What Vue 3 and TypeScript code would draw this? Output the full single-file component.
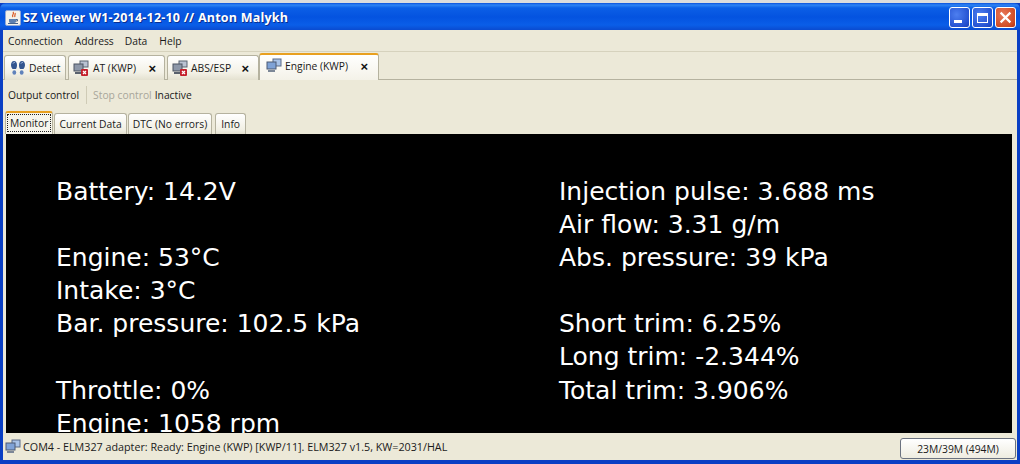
<script setup lang="ts">
const left: string[] = ['Battery: 14.2V', '', 'Engine: 53°C', 'Intake: 3°C', 'Bar. pressure: 102.5 kPa', '', 'Throttle: 0%', 'Engine: 1058 rpm'];
const right: string[] = ['Injection pulse: 3.688 ms', 'Air flow: 3.31 g/m', 'Abs. pressure: 39 kPa', '', 'Short trim: 6.25%', 'Long trim: -2.344%', 'Total trim: 3.906%'];
const menus: string[] = ['Connection', 'Address', 'Data', 'Help'];
const subTabs: string[] = ['Current Data', 'DTC (No errors)', 'Info'];
</script>

<template>
  <div class="window">
    <div class="titlebar">
      <svg class="app-icon" viewBox="0 0 16 16">
        <rect x="0.5" y="0.5" width="15" height="15" rx="1.5" fill="#f4f1ea" stroke="#8fa6d6" />
        <path d="M8 2c2 2-2 3 0 5M10 3c1 1.500-1 2 0 4" fill="none" stroke="#d9541e" stroke-width="1.200" />
        <path d="M4 9h7v2.500c0 1-1 1.500-3.500 1.500S4 12.500 4 11.500z" fill="#5c7fb0" />
        <path d="M11 9.500h1.500v1.500H11M3 13.500h10" fill="none" stroke="#44628f" />
      </svg>
      <span class="title">SZ Viewer W1-2014-12-10 // Anton Malykh</span>
      <div class="controls">
        <div class="ctl blue"><i class="min-glyph"></i></div>
        <div class="ctl blue"><i class="max-glyph"></i></div>
        <div class="ctl red">
          <svg viewBox="0 0 12 12" class="x-glyph"><path d="M1.500 1.500l9 9M10.500 1.500l-9 9" stroke="#fff" stroke-width="2" /></svg>
        </div>
      </div>
    </div>

    <div class="client">
      <nav class="menubar">
        <span v-for="m in menus" :key="m" class="menu">{{ m }}</span>
      </nav>

      <div class="tabstrip">
        <div class="tab tab-detect">
          <svg class="ic" viewBox="0 0 16 16">
            <path d="M4 1c2 0 3 2 3 4s-.5 3-1 4H2.500C2 8 1 7 1 5s1-4 3-4z" fill="#32558f" />
            <path d="M12 1c2 0 3 2 3 4s-1 3-1.500 4H10C9.500 8 9 7 9 5s1-4 3-4z" fill="#32558f" />
            <ellipse cx="4.300" cy="12.500" rx="1.900" ry="2.300" fill="#5f82bb" />
            <ellipse cx="11.700" cy="12.500" rx="1.900" ry="2.300" fill="#5f82bb" />
            <path d="M3 3.500c.5-1 1-1 2-1M11 3.500c.5-1 1-1 2-1" stroke="#a9c0e4" fill="none" />
          </svg>
          <span>Detect</span>
        </div>
        <div class="tab tab-at">
          <svg class="ic" viewBox="0 0 16 16">
            <rect x="7" y="1" width="8" height="6" fill="#b9c2d2" stroke="#5b6472" />
            <rect x="1" y="4" width="9" height="7" fill="#8d97a8" stroke="#4c5562" />
            <rect x="2" y="12" width="7" height="2" fill="#59616d" />
            <rect x="8" y="9" width="7" height="7" rx="1" fill="#c4202c" />
            <path d="M10 11l3 3M13 11l-3 3" stroke="#fff" stroke-width="1.200" />
          </svg>
          <span>AT (KWP)</span>
          <b class="close">×</b>
        </div>
        <div class="tab tab-abs">
          <svg class="ic" viewBox="0 0 16 16">
            <rect x="7" y="1" width="8" height="6" fill="#b9c2d2" stroke="#5b6472" />
            <rect x="1" y="4" width="9" height="7" fill="#8d97a8" stroke="#4c5562" />
            <rect x="2" y="12" width="7" height="2" fill="#59616d" />
            <rect x="8" y="9" width="7" height="7" rx="1" fill="#c4202c" />
            <path d="M10 11l3 3M13 11l-3 3" stroke="#fff" stroke-width="1.200" />
          </svg>
          <span>ABS/ESP</span>
          <b class="close">×</b>
        </div>
        <div class="tab tab-engine active">
          <svg class="ic" viewBox="0 0 16 16">
            <rect x="7" y="1" width="8" height="7" fill="#a9c3e8" stroke="#5a6a86" />
            <rect x="1" y="4" width="9" height="7" fill="#7fa2d6" stroke="#4c5a74" />
            <rect x="2" y="12" width="7" height="2" fill="#7c8797" />
          </svg>
          <span>Engine (KWP)</span>
          <b class="close">×</b>
        </div>
        <div class="tabline"></div>
      </div>

      <div class="toolbar">
        <span>Output control</span>
        <i class="sep"></i>
        <span class="disabled">Stop control</span>
        <span class="inactive">Inactive</span>
      </div>

      <div class="subtabs">
        <div class="subtab active"><span class="focus">Monitor</span></div>
        <div v-for="t in subTabs" :key="t" class="subtab">{{ t }}</div>
      </div>

      <main class="monitor">
        <div class="col col-left">
          <div v-for="(l, i) in left" :key="i" class="line">{{ l }}</div>
        </div>
        <div class="col col-right">
          <div v-for="(l, i) in right" :key="i" class="line">{{ l }}</div>
        </div>
      </main>

      <footer class="status">
        <svg class="ic st-ic" viewBox="0 0 16 16">
          <rect x="7" y="1" width="8" height="7" fill="#a9c3e8" stroke="#5a6a86" />
          <rect x="1" y="4" width="9" height="7" fill="#7fa2d6" stroke="#4c5a74" />
          <rect x="2" y="12" width="7" height="2" fill="#7c8797" />
        </svg>
        <span class="st-text">COM4 - ELM327 adapter: Ready: Engine (KWP) [KWP/11]. ELM327 v1.5, KW=2031/HAL</span>
        <div class="mem">23M/39M (494M)</div>
      </footer>
    </div>
  </div>
</template>

<style>
html, body { margin: 0; padding: 0; background: #0a3fc4; }
</style>

<style scoped>
.window {
  width: 1020px;
  height: 464px;
  display: flex;
  flex-direction: column;
  overflow: hidden;
  box-sizing: border-box;
  padding-top: 3px;
  background: linear-gradient(#ddd 0 3px, #0a3fc4 3px);
  font-family: "Open Sans", "Noto Sans", sans-serif;
  font-size: 10.300px;
  color: #1a1a1a;
}
.titlebar {
  height: 27px;
  flex: none;
  display: flex;
  align-items: center;
  padding: 2px 4px 0 5px;
  box-sizing: border-box;
  border-radius: 6px 6px 0 0;
  background: linear-gradient(#0a50dc 0, #2f84f4 2px, #0c5fe6 5px, #0453e0 14px, #0a5ee8 22px, #0a4bd0 27px);
}
.app-icon { width: 16px; height: 16px; flex: none; }
.title {
  margin-left: 2px;
  font-family: "Open Sans", sans-serif;
  font-weight: 700;
  font-size: 12.500px;
  letter-spacing: 0.220px;
  color: #fff;
  text-shadow: 1px 1px 0 #0a2f90;
}
.controls { margin-left: auto; display: flex; gap: 2px; }
.ctl {
  width: 21px;
  height: 21px;
  box-sizing: border-box;
  border: 1px solid #fff;
  border-radius: 3px;
  position: relative;
  display: flex;
  align-items: center;
  justify-content: center;
}
.blue { background: radial-gradient(circle at 35% 35%, #4d7ff0, #2350d0 75%, #1a3fb0); }
.red { background: radial-gradient(circle at 35% 35%, #e8795a, #d04a22 75%, #b03010); }
.min-glyph { width: 8px; height: 3px; background: #fff; margin: 8px 4px 0 0; }
.max-glyph { width: 11px; height: 10px; box-sizing: border-box; border: 1px solid #fff; border-top-width: 3px; }
.x-glyph { width: 13px; height: 13px; }
.client {
  flex: 1;
  min-height: 0;
  margin: 0 3px 4px;
  display: flex;
  flex-direction: column;
  background: #ece9d8;
}
.menubar {
  height: 22px;
  flex: none;
  display: flex;
  align-items: center;
  padding-left: 5px;
  border-bottom: 1px solid #d6d2bd;
  box-sizing: border-box;
}
.menu { margin-right: 12px; }
.menu:nth-child(2) { margin-right: 11px; }
.menu:nth-child(3) { margin-right: 12px; }
.tabstrip {
  height: 28px;
  flex: none;
  display: flex;
  align-items: flex-end;
  padding-left: 1px;
  position: relative;
  gap: 2px;
}
.tabline { position: absolute; left: 0; right: 0; bottom: 0; height: 1px; background: #b5b29f; }
.tab {
  height: 25px;
  box-sizing: border-box;
  display: flex;
  align-items: center;
  padding: 0 3px 0 4px;
  gap: 3px;
  background: linear-gradient(#fff, #f3f1e6 70%, #e4e1d0);
  border: 1px solid #b5b29f;
  border-bottom: 0;
  border-radius: 3px 3px 0 0;
  position: relative;
  z-index: 1;
}
.tab-detect { width: 62px; padding-left: 5px; }
.tab-at { width: 97px; padding-left: 4px; gap: 4px; }
.tab-at .close { margin-right: 5px; }
.tab-abs { width: 92px; padding-left: 4px; gap: 3px; }
.tab-abs .close { margin-right: 6px; }
.tab-engine { width: 120px; padding-left: 6px; }
.tab.active {
  height: 27px;
  margin-left: -2px;
  padding-bottom: 3px;
  background: linear-gradient(#fff, #f4f2e8);
  border-top: 2px solid #e8a020;
}
.ic { width: 16px; height: 16px; flex: none; }
.close { margin-left: auto; margin-right: 7px; font-size: 13px; line-height: 1; font-family: "Liberation Sans", sans-serif; color: #111; }
.toolbar {
  height: 29px;
  flex: none;
  display: flex;
  align-items: center;
  padding: 1px 0 0 5px;
  box-sizing: border-box;
  white-space: pre;
}
.sep { width: 1px; height: 18px; background: #cfcbb6; margin: 0 6px 0 7px; }
.disabled { color: #a8a69a; }
.inactive { margin-left: 3px; }
.subtabs {
  height: 25px;
  flex: none;
  display: flex;
  align-items: flex-end;
  padding-left: 2px;
  gap: 1px;
}
.subtab {
  height: 21px;
  box-sizing: border-box;
  padding: 0 4px;
  display: flex;
  align-items: center;
  background: linear-gradient(#fff, #f1efe3 80%, #e4e1d0);
  border: 1px solid #b5b29f;
  border-bottom: 0;
  border-radius: 3px 3px 0 0;
}
.subtab:last-child { padding: 0 5px; margin-left: 2px; }
.subtab.active {
  height: 23px;
  padding: 0 2px 2px;
  background: #f6f5ec;
  border-top: 2px solid #e8a020;
}
.focus { outline: 1px dotted #222; padding: 1px 2px; }
.monitor {
  flex: 1;
  min-height: 0;
  margin: 0 5px 0 3px;
  background: #000;
  color: #fff;
  display: flex;
  overflow: hidden;
  padding-top: 41px;
  font-family: "DejaVu Sans", sans-serif;
  font-size: 25px;
  line-height: 33.100px;
}
.col { flex: none; white-space: nowrap; }
.col-left { width: 503px; margin-left: 50px; }
.line { height: 33.100px; }
.status {
  height: 27px;
  flex: none;
  display: flex;
  align-items: center;
  padding: 0 1px 0 2px;
  gap: 2px;
}
.st-text { white-space: nowrap; font-size: 10.750px; }
.mem {
  margin-left: auto;
  width: 116px;
  height: 21px;
  margin-top: 4px;
  box-sizing: border-box;
  display: flex;
  align-items: center;
  justify-content: center;
  border: 1px solid #6b7280;
  border-radius: 3px;
  background: linear-gradient(#fff, #eeece0);
}
</style>
